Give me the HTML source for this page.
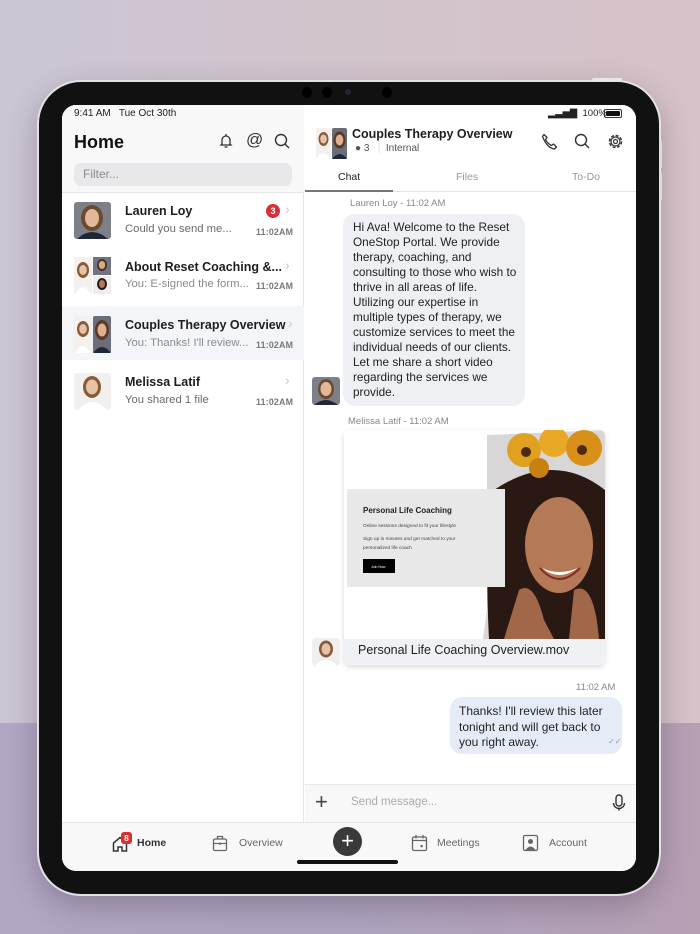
<!DOCTYPE html>
<html><head><meta charset="utf-8">
<style>
*{margin:0;padding:0;box-sizing:border-box}
body{width:700px;height:934px;overflow:hidden;font-family:"Liberation Sans",Arial,sans-serif;position:relative;
background:linear-gradient(90deg,#cbc6d4 0%,#d2c4cc 50%,#d6c2c8 100%)}
.bgb{position:absolute;left:0;top:723px;width:700px;height:211px;background:linear-gradient(90deg,#b1a7c4,#ada4c0 50%,#b7a0b4)}
.dev{position:absolute;left:37px;top:80px;width:624px;height:816px;border-radius:44px;background:#111;border:2px solid #e4e2e6;box-shadow:0 10px 30px rgba(60,40,60,.3)}
.cam{position:absolute;top:87px;width:10px;height:11px;border-radius:50%;background:#000}
.scr{position:absolute;left:62px;top:105px;width:574px;height:766px;border-radius:14px;background:#fff;overflow:hidden}
.abs{position:absolute}
.lp{position:absolute;left:0;top:0;width:242px;height:717px;background:#fff;border-right:1px solid #e6e6e8}
.top{position:absolute;left:0;top:0;width:242px;height:88px;background:#f8f8f8;border-bottom:1px solid #e6e6e8}
.t{position:absolute;white-space:nowrap}
.row .n{font-size:12.5px;font-weight:bold;color:#1e1e22}
.row .s{font-size:11.3px;color:#6a6a70}
.tm{font-size:8.8px;font-weight:bold;color:#777;letter-spacing:.2px}
.chev{color:#c8c8cc;font-size:14px}
.rp{position:absolute;left:243px;top:0;width:331px;height:717px;background:#fff}
.bub{position:absolute;background:#eff0f4;border-radius:12px;font-size:11.8px;line-height:15px;color:#222;padding:6px 10px;white-space:nowrap}
</style></head><body>
<div class="bgb"></div>
<div class="dev"></div>
<div style="position:absolute;left:592px;top:78px;width:30px;height:3px;background:#e8e6ea;border-radius:2px"></div>
<div style="position:absolute;left:659px;top:140px;width:3px;height:28px;background:#ddd;border-radius:2px"></div>
<div style="position:absolute;left:659px;top:172px;width:3px;height:28px;background:#ddd;border-radius:2px"></div>
<div class="cam" style="left:302px"></div><div class="cam" style="left:322px"></div>
<div class="cam" style="left:345px;width:6px;height:6px;top:89px;background:#223"></div>
<div class="cam" style="left:382px"></div>

<div class="scr">
 <div class="lp">
  <div class="top">
   <div class="t" style="left:12px;top:3px;font-size:10px;color:#222">9:41 AM&nbsp;&nbsp; Tue Oct 30th</div>
   <div class="t" style="left:12px;top:27px;font-size:18px;font-weight:bold;color:#111">Home</div>
   <svg class="abs" style="left:157px;top:28px" width="14" height="16" viewBox="0 0 14 16"><path d="M3 11V7a4 4 0 018 0v4l1 1H2z M5.5 14h3" fill="none" stroke="#333" stroke-width="1.3"/><path d="M7 1v2" stroke="#333" stroke-width="1.3"/></svg>
   <div class="t" style="left:184px;top:25px;font-size:17px;color:#333">@</div>
   <svg class="abs" style="left:212px;top:28px" width="17" height="17" viewBox="0 0 17 17"><circle cx="7" cy="7" r="5.5" fill="none" stroke="#333" stroke-width="1.4"/><path d="M11 11l4 4" stroke="#333" stroke-width="1.4"/></svg>
   <div class="abs" style="left:12px;top:58px;width:218px;height:23px;background:#e8e8ea;border-radius:7px"></div>
   <div class="t" style="left:21px;top:62px;font-size:12px;color:#8a8a90">Filter...</div>
  </div>
  <div class="row">
   <svg class="abs" style="left:12px;top:97px" width="37" height="37"><rect width="37" height="37" rx="3" fill="#7d8088"/><ellipse cx="18" cy="16" rx="11" ry="13" fill="#6b4a30"/><ellipse cx="18" cy="16" rx="7" ry="9" fill="#e2b89a"/><path d="M3 37q15-14 31 0z" fill="#1e2838"/></svg>
   <div class="t n" style="left:63px;top:99px">Lauren Loy</div>
   <div class="t s" style="left:63px;top:118px">Could you send me...</div>
   <div class="abs" style="left:204px;top:99px;width:14px;height:14px;border-radius:50%;background:#d93036;color:#fff;font-size:9px;font-weight:bold;text-align:center;line-height:14px">3</div>
   <div class="t chev" style="left:223px;top:96px">›</div>
   <div class="t tm" style="left:194px;top:122px">11:02AM</div>
  </div>
  <div class="row">
   <svg class="abs" style="left:12px;top:152px" width="37" height="37"><rect width="18" height="37" fill="#f3f0ee"/><ellipse cx="9" cy="13" rx="6" ry="8" fill="#8a5a38"/><ellipse cx="9" cy="13" rx="3.8" ry="5" fill="#e6c2a6"/><path d="M1 37q8-14 16 0z" fill="#fff"/><rect x="19" width="18" height="18" fill="#707480"/><ellipse cx="28" cy="8" rx="5" ry="6" fill="#4a3020"/><ellipse cx="28" cy="8" rx="3.2" ry="4" fill="#d9a888"/><rect x="19" y="19" width="18" height="18" fill="#eee"/><ellipse cx="28" cy="27" rx="5" ry="6" fill="#2a1a14"/><ellipse cx="28" cy="27" rx="3" ry="4" fill="#b07a58"/></svg>
   <div class="t n" style="left:63px;top:155px">About Reset Coaching &amp;...</div>
   <div class="t s" style="left:63px;top:173px;color:#8a8a90">You: E-signed the form...</div>
   <div class="t chev" style="left:223px;top:152px">›</div>
   <div class="t tm" style="left:194px;top:176px">11:02AM</div>
  </div>
  <div class="abs" style="left:0;top:201px;width:242px;height:54px;background:#f4f5f8"></div>
  <div class="row">
   <svg class="abs" style="left:12px;top:211px" width="37" height="37"><rect width="18" height="37" fill="#f3f0ee"/><ellipse cx="9" cy="13" rx="6" ry="8" fill="#8a5a38"/><ellipse cx="9" cy="13" rx="3.8" ry="5" fill="#e6c2a6"/><path d="M1 37q8-14 16 0z" fill="#fff"/><rect x="19" width="18" height="37" rx="2" fill="#6a6e78"/><ellipse cx="28" cy="14" rx="7" ry="10" fill="#5a3a24"/><ellipse cx="28" cy="14" rx="4.5" ry="6.5" fill="#deb092"/><path d="M19 37q9-12 18 0z" fill="#1e2838"/></svg>
   <div class="t n" style="left:63px;top:213px">Couples Therapy Overview</div>
   <div class="t s" style="left:63px;top:232px;color:#8a8a90">You: Thanks! I'll review...</div>
   <div class="t chev" style="left:226px;top:210px">›</div>
   <div class="t tm" style="left:194px;top:235px">11:02AM</div>
  </div>
  <div class="row">
   <svg class="abs" style="left:12px;top:268px" width="37" height="37"><rect width="37" height="37" rx="3" fill="#f2f0ef"/><ellipse cx="18" cy="14" rx="9" ry="11" fill="#8a5a38"/><ellipse cx="18" cy="14" rx="6" ry="7.5" fill="#e6c2a6"/><path d="M4 37q14-16 29 0z" fill="#fff"/></svg>
   <div class="t n" style="left:63px;top:270px">Melissa Latif</div>
   <div class="t s" style="left:63px;top:289px">You shared 1 file</div>
   <div class="t chev" style="left:223px;top:267px">›</div>
   <div class="t tm" style="left:194px;top:292px">11:02AM</div>
  </div>
 </div>

 <div class="rp">
  <div class="t" style="left:243px;top:3px;font-size:9.5px;color:#222">&#9602;&#9603;&#9605;&#9607;&nbsp; 100%</div>
  <div class="abs" style="left:299px;top:4px;width:18px;height:9px;border:1px solid #333;border-radius:2px;padding:1px"><div style="width:100%;height:100%;background:#111;border-radius:1px"></div></div>
  <svg class="abs" style="left:11px;top:23px" width="31" height="31"><rect width="15" height="31" fill="#f3f0ee"/><ellipse cx="7.5" cy="11" rx="5" ry="7" fill="#8a5a38"/><ellipse cx="7.5" cy="11" rx="3.3" ry="4.5" fill="#e6c2a6"/><path d="M0 31q7-12 15 0z" fill="#fff"/><rect x="16" width="15" height="31" rx="2" fill="#6a6e78"/><ellipse cx="23.5" cy="12" rx="6" ry="8.5" fill="#5a3a24"/><ellipse cx="23.5" cy="12" rx="3.8" ry="5.5" fill="#deb092"/><path d="M16 31q8-10 15 0z" fill="#1e2838"/></svg>
  <div class="t" style="left:47px;top:22px;font-size:12.5px;font-weight:bold;color:#1e1e22">Couples Therapy Overview</div>
  <div class="t" style="left:50px;top:38px;font-size:10px;color:#555">&#9679; 3&nbsp;&nbsp;&nbsp;<span style="color:#ddd">|</span>&nbsp;&nbsp;Internal</div>
  <svg class="abs" style="left:236px;top:28px" width="17" height="17" viewBox="0 0 17 17"><path d="M3 1.5l3 3-1.5 2q2 4 6 6l2-1.5 3 3-2 2Q6 15 1.5 3.5z" fill="none" stroke="#333" stroke-width="1.3" stroke-linejoin="round"/></svg>
  <svg class="abs" style="left:269px;top:28px" width="17" height="17" viewBox="0 0 17 17"><circle cx="7" cy="7" r="5.5" fill="none" stroke="#333" stroke-width="1.4"/><path d="M11 11l4 4" stroke="#333" stroke-width="1.4"/></svg>
  <svg class="abs" style="left:302px;top:28px" width="17" height="17" viewBox="0 0 17 17"><circle cx="8.5" cy="8.5" r="6" fill="none" stroke="#333" stroke-width="1.5" stroke-dasharray="3 1.7"/><circle cx="8.5" cy="8.5" r="4.5" fill="none" stroke="#333" stroke-width="1.2"/><circle cx="8.5" cy="8.5" r="2" fill="none" stroke="#333" stroke-width="1.2"/></svg>
  <div class="t" style="left:33px;top:66px;font-size:10.5px;color:#222">Chat</div>
  <div class="t" style="left:151px;top:66px;font-size:10.5px;color:#999">Files</div>
  <div class="t" style="left:267px;top:66px;font-size:10.5px;color:#999">To-Do</div>
  <div class="abs" style="left:0;top:86px;width:331px;height:1px;background:#e4e4e6"></div>
  <div class="abs" style="left:0;top:85px;width:88px;height:2px;background:#777"></div>

  <div class="t" style="left:45px;top:93px;font-size:9.5px;color:#888">Lauren Loy - 11:02 AM</div>
  <div class="bub" style="left:38px;top:109px;width:182px;height:192px">Hi Ava! Welcome to the Reset<br>OneStop Portal. We provide<br>therapy, coaching, and<br>consulting to those who wish to<br>thrive in all areas of life.<br>Utilizing our expertise in<br>multiple types of therapy, we<br>customize services to meet the<br>individual needs of our clients.<br>Let me share a short video<br>regarding the services we<br>provide.</div>
  <svg class="abs" style="left:7px;top:272px" width="28" height="28"><rect width="28" height="28" rx="3" fill="#7d8088"/><ellipse cx="14" cy="12" rx="8" ry="10" fill="#6b4a30"/><ellipse cx="14" cy="12" rx="5.5" ry="7" fill="#e2b89a"/><path d="M2 28q12-10 24 0z" fill="#1e2838"/></svg>

  <div class="t" style="left:43px;top:311px;font-size:9.5px;color:#888">Melissa Latif - 11:02 AM</div>
  <div class="abs" style="left:39px;top:325px;width:261px;height:235px;border-radius:6px;background:#fff;box-shadow:0 2px 6px rgba(0,0,0,.15);overflow:hidden">
   <svg class="abs" style="left:0;top:0" width="261" height="209" viewBox="0 0 261 209">
    <rect width="261" height="209" fill="#fff"/>
    <path d="M143 5L261 0V209H139L143 180V110Z" fill="#d8d6d6"/>
    <path d="M150 60Q140 110 145 209H261V60Q210 20 150 60Z" fill="#2a1812"/>
    <ellipse cx="215" cy="115" rx="34" ry="48" fill="#b47a58"/>
    <path d="M175 160Q190 150 200 190L210 209H160Z" fill="#a06848"/>
    <path d="M230 160Q250 150 255 209H225Z" fill="#a06848"/>
    <path d="M198 138Q215 152 234 138Q215 146 198 138Z" fill="#fff"/>
    <path d="M196 138Q215 160 236 138" fill="none" stroke="#8a2820" stroke-width="2"/>
    <circle cx="180" cy="20" r="17" fill="#e0a020"/><circle cx="210" cy="12" r="15" fill="#e8a828"/><circle cx="240" cy="18" r="18" fill="#d89018"/><circle cx="195" cy="38" r="10" fill="#c88010"/>
    <circle cx="182" cy="22" r="5" fill="#4a2a10"/><circle cx="238" cy="20" r="5" fill="#4a2a10"/>
    <rect x="3" y="59" width="158" height="98" fill="#e8e8e8"/>
    <text x="19" y="83" font-family="Liberation Sans" font-size="8" font-weight="bold" fill="#222">Personal Life Coaching</text>
    <text x="19" y="97" font-family="Liberation Sans" font-size="4.8" fill="#444">Online sessions designed to fit your lifestyle</text>
    <text x="19" y="110" font-family="Liberation Sans" font-size="4.8" fill="#444">Sign up in minutes and get matched to your</text>
    <text x="19" y="119" font-family="Liberation Sans" font-size="4.8" fill="#444">personalized life coach</text>
    <rect x="19" y="129" width="32" height="14" fill="#000"/>
    <text x="27" y="138" font-family="Liberation Sans" font-size="3.5" fill="#fff">Join Now</text>
   </svg>
   <div class="abs" style="left:0;top:209px;width:261px;height:26px;background:#f0f1f5"></div>
   <div class="t" style="left:14px;top:213px;font-size:12.5px;color:#1e1e22">Personal Life Coaching Overview.mov</div>
  </div>
  <svg class="abs" style="left:7px;top:533px" width="28" height="28"><rect width="28" height="28" rx="3" fill="#f2f0ef"/><ellipse cx="14" cy="11" rx="7" ry="8.5" fill="#8a5a38"/><ellipse cx="14" cy="11" rx="4.5" ry="5.8" fill="#e6c2a6"/><path d="M3 28q11-12 22 0z" fill="#fff"/></svg>

  <div class="t" style="left:271px;top:577px;font-size:9.5px;color:#888">11:02 AM</div>
  <div class="bub" style="left:145px;top:592px;width:172px;height:57px;background:#e6ecf7;line-height:15.5px;padding:7px 9px;font-size:12px">Thanks! I'll review this later<br>tonight and will get back to<br>you right away.</div>
  <div class="t" style="left:303px;top:632px;font-size:8px;color:#999">&#10003;&#10003;</div>

  <div class="abs" style="left:0;top:679px;width:331px;height:38px;background:#f8f8f8;border-top:1px solid #e8e8ea"></div>
  <div class="t" style="left:10px;top:684px;font-size:22px;color:#444;font-weight:300">+</div>
  <div class="t" style="left:46px;top:691px;font-size:11.5px;color:#aaa">Send message...</div>
  <svg class="abs" style="left:307px;top:689px" width="14" height="18" viewBox="0 0 14 18"><rect x="4" y="1" width="6" height="11" rx="3" fill="none" stroke="#333" stroke-width="1.4"/><path d="M1.5 9a5.5 5.5 0 0011 0M7 14.5v2" fill="none" stroke="#333" stroke-width="1.4"/></svg>
 </div>

 <div class="abs" style="left:0;top:717px;width:574px;height:49px;background:#f8f8f8;border-top:1px solid #e6e6e8"></div>
 <svg class="abs" style="left:50px;top:731px" width="16" height="16" viewBox="0 0 16 16"><path d="M1.5 15V7L8 1.5 14.5 7V15H10V11H6V15Z" fill="none" stroke="#333" stroke-width="1.5"/></svg>
 <div class="abs" style="left:59px;top:727px;width:11px;height:12px;background:#d93036;border-radius:3px;color:#fff;font-size:8.5px;font-weight:bold;text-align:center;line-height:12px">8</div>
 <div class="t" style="left:75px;top:732px;font-size:10.5px;color:#333;font-weight:bold">Home</div>
 <svg class="abs" style="left:150px;top:730px" width="16" height="17" viewBox="0 0 16 17"><rect x="1.5" y="4" width="13" height="11.5" rx="1.5" fill="none" stroke="#666" stroke-width="1.3"/><path d="M5.5 4V1.5h5V4M1.5 8.5h13M8 7.5v2.5" fill="none" stroke="#666" stroke-width="1.3"/></svg>
 <div class="t" style="left:177px;top:732px;font-size:10.5px;color:#666">Overview</div>
 <div class="abs" style="left:271px;top:722px;width:29px;height:29px;border-radius:50%;background:#3a3a3a;color:#fff;font-size:22px;text-align:center;line-height:28px;font-weight:300">+</div>
 <div class="abs" style="left:235px;top:755px;width:101px;height:4px;border-radius:2px;background:#111"></div>
 <svg class="abs" style="left:349px;top:729px" width="17" height="18" viewBox="0 0 17 18"><rect x="1.5" y="3" width="14" height="13.5" rx="1.5" fill="none" stroke="#666" stroke-width="1.3"/><path d="M1.5 6.5h14M5 1v3.5M12 1v3.5" stroke="#666" stroke-width="1.3"/><rect x="9.5" y="11" width="2.2" height="2.2" fill="#666"/></svg>
 <div class="t" style="left:375px;top:732px;font-size:10.5px;color:#666">Meetings</div>
 <svg class="abs" style="left:460px;top:729px" width="17" height="18" viewBox="0 0 17 18"><rect x="1.5" y="1.5" width="14" height="15" rx="1.5" fill="none" stroke="#666" stroke-width="1.3"/><circle cx="8.5" cy="7.5" r="2.5" fill="#666"/><path d="M3.5 16q5-7 10 0z" fill="#666"/></svg>
 <div class="t" style="left:487px;top:732px;font-size:10.5px;color:#666">Account</div>
</div>
</body></html>
